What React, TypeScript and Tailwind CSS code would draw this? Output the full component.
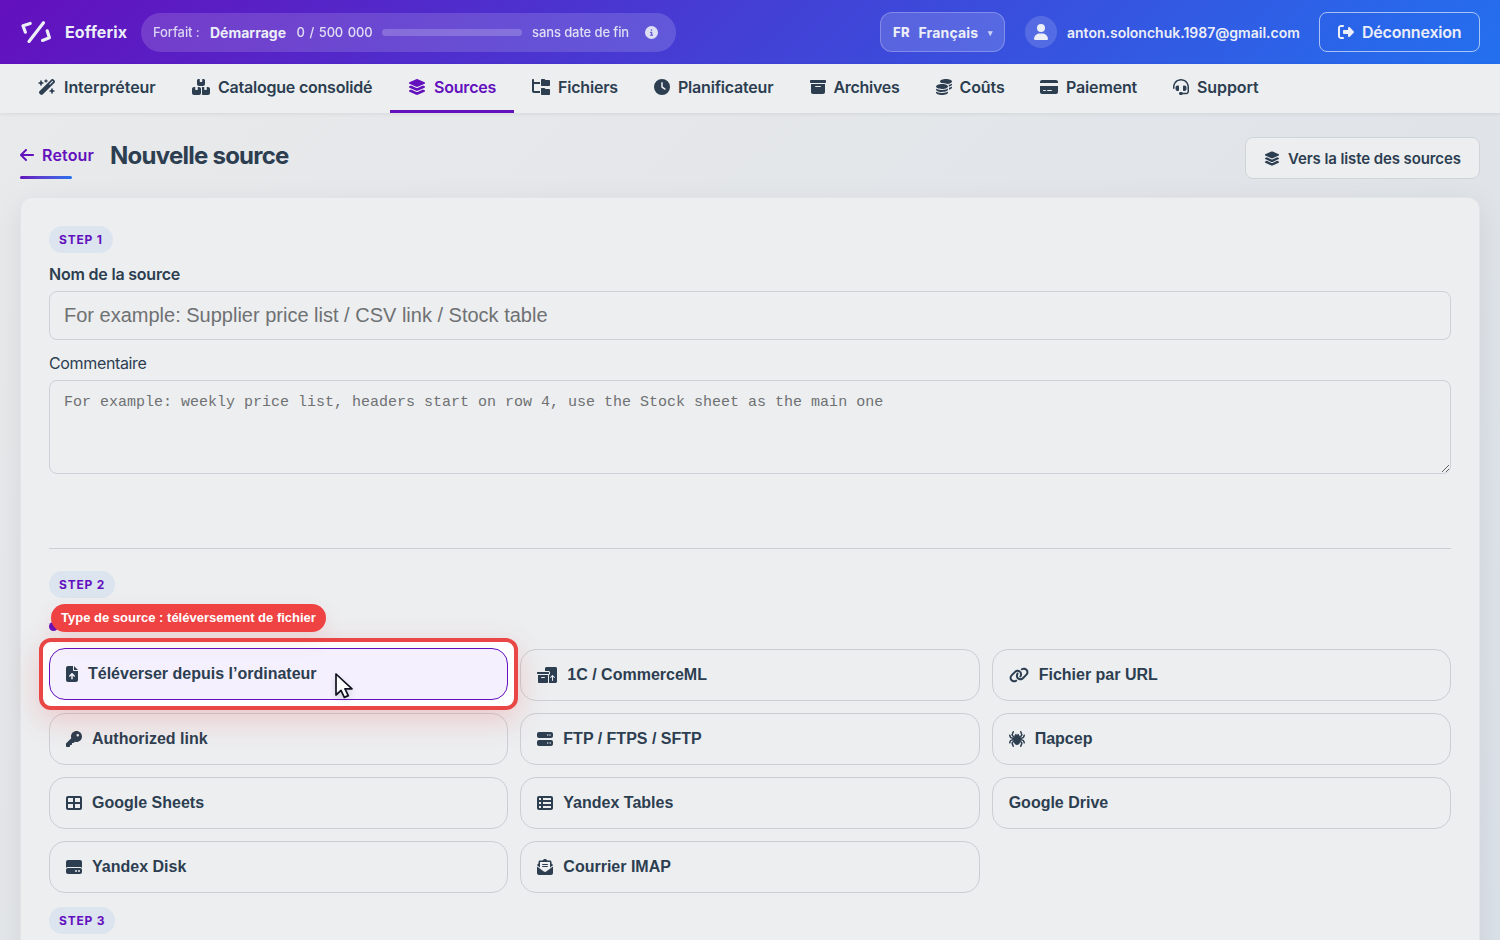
import {
  FaArrowLeft,
  FaBoxArchive,
  FaBoxesPacking,
  FaBoxesStacked,
  FaCircleInfo,
  FaClock,
  FaCoins,
  FaCreditCard,
  FaEnvelopeOpenText,
  FaFileArrowUp,
  FaFolderTree,
  FaHardDrive,
  FaHeadset,
  FaKey,
  FaLayerGroup,
  FaLink,
  FaRightFromBracket,
  FaServer,
  FaSpider,
  FaTableCellsLarge,
  FaTableList,
  FaUser,
  FaWandMagicSparkles,
} from "react-icons/fa6";

const NavItems = [
  { label: "Interpréteur", icon: FaWandMagicSparkles, size: "w-[18px]", width: "w-[154px] tracking-[-0.05px]" },
  { label: "Catalogue consolidé", icon: FaBoxesStacked, size: "w-[18px]", width: "w-[216px] tracking-[-0.22px]" },
  { label: "Sources", icon: FaLayerGroup, size: "w-[18px]", width: "w-[124px] tracking-[-0.2px]", active: true },
  { label: "Fichiers", icon: FaFolderTree, size: "w-[18px]", width: "w-[122px] tracking-[-0.2px]" },
  { label: "Planificateur", icon: FaClock, size: "w-4", width: "w-[155.5px] tracking-[-0.2px]" },
  { label: "Archives", icon: FaBoxArchive, size: "w-4", width: "w-[126px] tracking-[-0.3px]" },
  { label: "Coûts", icon: FaCoins, size: "w-4", width: "w-[104.5px] tracking-[-0.1px]" },
  { label: "Paiement", icon: FaCreditCard, size: "w-[18px]", width: "w-[133px] tracking-[-0.15px]" },
  { label: "Support", icon: FaHeadset, size: "w-4", width: "w-[122px] tracking-[-0.1px]" },
];

const SourceTypes = [
  { label: "Téléverser depuis l’ordinateur", icon: FaFileArrowUp, size: "w-3", selected: true },
  { label: "1C / CommerceML", icon: FaBoxesPacking, size: "w-5" },
  { label: "Fichier par URL", icon: FaLink, size: "w-5" },
  { label: "Authorized link", icon: FaKey, size: "w-4" },
  { label: "FTP / FTPS / SFTP", icon: FaServer, size: "w-4" },
  { label: "Парсер", icon: FaSpider, size: "w-4" },
  { label: "Google Sheets", icon: FaTableCellsLarge, size: "w-4" },
  { label: "Yandex Tables", icon: FaTableList, size: "w-4" },
  { label: "Google Drive" },
  { label: "Yandex Disk", icon: FaHardDrive, size: "w-4" },
  { label: "Courrier IMAP", icon: FaEnvelopeOpenText, size: "w-4" },
];

function Logo() {
  return (
    <svg
      viewBox="0 0 32 26"
      className="h-[26px] w-8"
      fill="none"
      stroke="currentColor"
      strokeWidth="3.2"
      strokeLinecap="round"
      strokeLinejoin="round"
    >
      <path d="M10.2 4.4 3 6.8 5.4 13.2" />
      <path d="M23.5 3.8 9 22.4" />
      <path d="M27.2 11.8 29.4 18.8 22.5 21.4" />
    </svg>
  );
}

function Header() {
  return (
    <header className="flex h-16 items-center bg-[linear-gradient(135deg,#6310bd,#2370ee)] px-5 text-[#eceef8]">
      <Logo />
      <div className="ml-[13px] w-[63px] text-base font-bold tracking-[0.15px]">Eofferix</div>

      <div className="ml-[13px] flex h-[39px] w-[535px] items-center rounded-full bg-white/15 px-3 text-[13px] whitespace-nowrap">
        <span className="w-[57px] pt-0.5 font-medium tracking-[-0.1px] opacity-85">Forfait :</span>
        <span className="w-[86.5px] pt-px text-[14px] font-bold">Démarrage</span>
        <span className="w-[85.5px] pt-0.5 font-medium tracking-[-0.2px] [word-spacing:1.5px] opacity-90">
          0 / 500 000
        </span>
        <div className="h-[7px] w-[140px] rounded-full bg-white/20"></div>
        <span className="ml-[10px] w-[113px] pt-0.5 font-medium tracking-[-0.1px] opacity-90">sans date de fin</span>
        <FaCircleInfo className="h-[13px] w-[13px] opacity-90" />
      </div>

      <div className="ml-auto flex items-center">
        <button className="flex h-10 w-[125px] items-center rounded-xl border border-white/25 bg-white/15 pl-3 text-left text-sm font-bold">
          <span className="w-[25.5px] text-[13px] font-extrabold tracking-[0.4px]">FR</span>
          <span className="w-[69px] pt-px tracking-[0.15px]">Français</span>
          <span className="pt-0.5 text-[9px] opacity-80">▾</span>
        </button>
        <div className="ml-5 flex h-8 w-8 items-center justify-center rounded-full bg-white/15">
          <FaUser className="h-4 w-[14px]" />
        </div>
        <div className="ml-[10px] w-[252px] pt-px text-sm font-semibold">anton.solonchuk.1987@gmail.com</div>
        <button className="flex h-10 w-[161px] items-center gap-2 rounded-lg border border-white/60 pl-[18px] text-base font-semibold tracking-[-0.2px]">
          <FaRightFromBracket className="h-4 w-4" />
          Déconnexion
        </button>
      </div>
    </header>
  );
}

function Navbar() {
  return (
    <nav className="relative flex h-[49px] bg-[#eceef0] px-5 shadow-[0_1px_4px_rgba(0,0,0,0.08)]">
      {NavItems.map(({ label, icon: Icon, size, width, active }) => (
        <div
          key={label}
          className={`flex items-center gap-2 border-b-3 pl-[18px] whitespace-nowrap font-semibold ${width} ${
            active ? "border-[#6310bd] text-[#6310bd]" : "border-transparent"
          }`}
        >
          <Icon className={`h-4 shrink-0 ${size}`} />
          {label}
        </div>
      ))}
    </nav>
  );
}

function StepBadge({ step }: { step: number }) {
  return (
    <span className="flex h-[27px] w-fit items-center rounded-full bg-[#dbe4ef] px-[10px] text-xs font-bold tracking-[0.8px] text-[#6310bd]">
      STEP {step}
    </span>
  );
}

function Cursor() {
  return (
    <svg viewBox="0 0 20 27" className="absolute top-[23px] left-[284px] h-[27px] w-5 drop-shadow-md">
      <path
        d="M2 2v21l5-4.6 3.3 7 4-1.8-3.3-6.8h7z"
        fill="#fff"
        stroke="#10131f"
        strokeWidth="1.7"
        strokeLinejoin="round"
      />
    </svg>
  );
}

export default function App() {
  return (
    <div className="h-[940px] overflow-hidden bg-[linear-gradient(135deg,#e9eaeb,#dbe1e8)] font-['Inter',sans-serif] text-base text-[#2c3e50]">
      <Header />
      <Navbar />

      <main className="px-5">
        <div className="flex h-[84px] justify-between pt-6">
          <div className="flex items-start">
            <div className="flex w-[90px] flex-col">
              <div className="mt-[6px] flex items-center gap-2 font-semibold tracking-[0.15px] text-[#6310bd]">
                <FaArrowLeft className="h-4 w-[14px]" />
                Retour
              </div>
              <div className="mt-[9px] h-[3px] w-[52px] rounded-full bg-linear-to-r from-[#6310bd] to-[#2370ee]"></div>
            </div>
            <h1 className="mt-[1px] text-2xl leading-9 font-bold tracking-[-0.75px]">Nouvelle source</h1>
          </div>
          <button className="flex h-[42px] w-[235px] items-center gap-2 rounded-lg border border-[#cfd4d8] bg-[#eceef0] pt-px pl-[18px] text-[15px] font-semibold tracking-[-0.1px] whitespace-nowrap">
            <FaLayerGroup className="h-[15px] w-4" />
            <span className="pt-px">Vers la liste des sources</span>
          </button>
        </div>

        <section className="h-[800px] rounded-xl border border-[#e2e5e8] bg-[#eceef0] px-7 pt-7 shadow-[0_8px_30px_rgba(0,0,0,0.08)]">
          <StepBadge step={1} />
          <label className="mt-[9px] block font-semibold tracking-[-0.2px]">Nom de la source</label>
          <input
            className="mt-[5px] block h-[49px] w-full rounded-lg border border-[#cbd1d6] px-[14px] font-['Liberation_Sans',sans-serif] text-xl placeholder:text-[#6f7173]"
            placeholder="For example: Supplier price list / CSV link / Stock table"
          />
          <label className="mt-[11px] block tracking-[-0.35px]">Commentaire</label>
          <textarea
            className="mt-[5px] block h-[94px] w-full rounded-lg border border-[#cbd1d6] px-[14px] py-[11px] font-['Liberation_Mono',monospace] text-[15px] leading-[22px] placeholder:text-[#6f7173]"
            placeholder="For example: weekly price list, headers start on row 4, use the Stock sheet as the main one"
          />

          <div className="mt-[74px] border-t border-[#cbcfd3] pt-[22px]">
            <StepBadge step={2} />
            <div className="relative flex h-[51px] items-start text-[#6310bd]">
              <div className="mt-[24px] h-[9px] w-[9px] rounded-full bg-[#6310bd]"></div>
              <span className="absolute top-[6px] left-[2px] z-20 flex h-7 w-[275px] items-center justify-center rounded-full bg-[#ef4343] font-['Liberation_Sans',sans-serif] text-[13px] font-bold whitespace-nowrap text-white shadow-[0_8px_20px_rgba(239,68,68,0.12)]">
                Type de source : téléversement de fichier
              </span>
            </div>

            <div className="grid grid-cols-3 gap-3 font-['Liberation_Sans',sans-serif]">
              {SourceTypes.map(({ label, icon: Icon, size, selected }) => (
                <div
                  key={label}
                  className={`flex h-[52px] items-center gap-[10px] rounded-2xl border px-4 font-bold ${
                    selected ? "relative z-10 -mt-px mb-px border-transparent" : "border-[#cbcfd3]"
                  }`}
                >
                  {selected && (
                    <>
                      <div className="absolute -inset-[11px] -z-10 rounded-xl border-4 border-[#e94646] bg-white shadow-[0_10px_30px_rgba(239,68,68,0.22)]"></div>
                      <div className="absolute -inset-px -z-10 rounded-2xl border border-[#6310bd] bg-[#f4f0fd]"></div>
                      <Cursor />
                    </>
                  )}
                  {Icon && <Icon className={`h-4 shrink-0 ${size}`} />}
                  {label}
                </div>
              ))}
            </div>
          </div>

          <div className="mt-[14px]">
            <StepBadge step={3} />
          </div>
        </section>
      </main>
    </div>
  );
}
